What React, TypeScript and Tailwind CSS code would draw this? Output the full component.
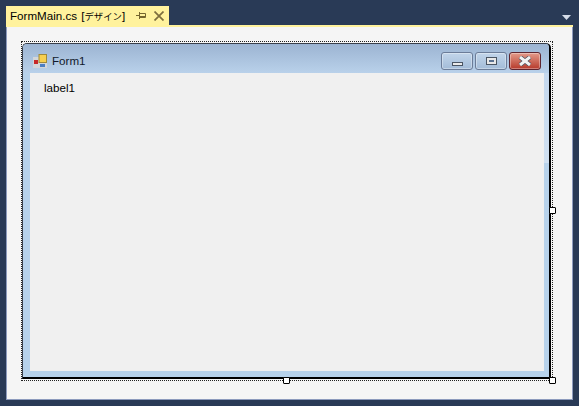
export default function App() {
  const btn = "w-[32px] h-[18px] rounded-[3px] border flex items-center justify-center shadow-[inset_0_0_0_1px_rgba(255,255,255,0.35)]";
  return (
    <div className="w-[579px] h-[406px] bg-[#293a56] flex flex-col overflow-hidden pt-[6px] px-[6px] pb-[6px] font-['Liberation_Sans',sans-serif]">
      <div className="flex items-start h-[19px] shrink-0">
        <div className="w-[163px] h-[19px] bg-[#fff29d] flex items-center pl-[4px] text-black">
          <span className="text-[11.6px] leading-[19px] whitespace-nowrap w-[120px]">
            FormMain.cs <span className="ml-[1px]">[</span><span className="font-['Noto_Sans_CJK_JP',sans-serif] text-[9.4px]">デザイン</span>]
          </span>
          <svg width="10" height="9" viewBox="0 0 10 9" className="ml-[6px]" fill="none" stroke="#75662e">
            <path d="M0 4.5H3.5M3.5 1V8M3.5 2.5H9.5V6.5H3.5M3.5 5.5H9.5" />
          </svg>
          <svg width="10" height="10" viewBox="0 0 10 10" className="ml-[8px]" fill="none" stroke="#7d6e3e" strokeWidth="1.7">
            <path d="M0.5 0.5L9.5 9.5M9.5 0.5L0.5 9.5" />
          </svg>
        </div>
        <div className="flex-1" />
        <svg width="9" height="5" viewBox="0 0 9 5" className="mt-[9px] mr-[2px]"><path d="M0 0H9L4.5 5Z" fill="#d5dce8" /></svg>
      </div>
      <div className="h-[2px] bg-[#fff29d] shrink-0" />
      <div className="flex-1 bg-[#f5f5f5] border-l border-r border-b border-[#8d9bbd] pt-[14px] pl-[14px]">
        <div className="relative w-[532px] h-[340px] border border-dotted border-[#222] py-px">
          <div className="w-[529px] h-[336px] rounded-t-[5px] border-2 border-t border-l border-t-[#3a3f4a] border-l-[#3a3f4a] border-r-black border-b-black flex flex-col bg-[#b7d2eb]">
            <div className="h-[29px] shrink-0 rounded-t-[4px] bg-gradient-to-b from-[#9cb4d2] to-[#b9d1ea] flex items-center pt-[5px] pl-[10px] pr-[8px]">
              <svg width="14" height="14" viewBox="0 0 14 14">
                <rect x="0" y="3" width="14" height="11" fill="#d3d6da" />
                <rect x="1" y="6" width="4" height="4" fill="#c6282a" />
                <rect x="6" y="0.5" width="7.5" height="8" fill="#f6cf4f" stroke="#a08a3a" strokeWidth="1" />
                <rect x="7" y="10" width="5" height="3" fill="#4d7fc4" />
              </svg>
              <span className="ml-[5px] text-[11.6px] leading-[14px] text-[#10192b]">Form1</span>
              <div className="flex-1" />
              <div className="flex gap-[2px] items-center">
                <div className={`${btn} border-[#6b7c98] bg-gradient-to-b from-[#c2d5ea] to-[#a3bcd8]`}>
                  <div className="w-[11px] h-[4px] mt-[6px] bg-[#eaeaea] border border-[#4a5563]" />
                </div>
                <div className={`${btn} border-[#6b7c98] bg-gradient-to-b from-[#c2d5ea] to-[#a3bcd8]`}>
                  <div className="w-[11px] h-[8px] bg-[#e8e8e8] border border-[#4a5563] flex items-center justify-center">
                    <div className="w-[5px] h-[2px] bg-[#5b7291]" />
                  </div>
                </div>
                <div className={`${btn} border-[#5d2530] bg-gradient-to-b from-[#e39a8b] to-[#b5372a]`}>
                  <svg width="14" height="10" viewBox="0 0 14 10" fill="none">
                    <path d="M2 1L12 9M12 1L2 9" stroke="#4b4f5c" strokeWidth="4.4" />
                    <path d="M2 1L12 9M12 1L2 9" stroke="#f2f2f2" strokeWidth="3" />
                  </svg>
                </div>
              </div>
            </div>
            <div className="flex-1 flex pl-[7px] pb-[6px]">
              <div className="w-[514px] h-[298px] bg-[#f0f0f0] pl-[14px] pt-[8px] text-[11.6px] leading-[14px] text-black">
                label1
              </div>
              <div className="w-[5px] h-[90px] bg-gradient-to-b from-[#c4d8ee] to-[#d0e0f1]" />
            </div>
          </div>
          <div className="absolute right-[-4px] top-[165px] w-[7px] h-[7px] bg-white border border-black rounded-[1px]" />
          <div className="absolute left-[261px] bottom-[-4px] w-[7px] h-[7px] bg-white border border-black rounded-[1px]" />
          <div className="absolute right-[-4px] bottom-[-4px] w-[7px] h-[7px] bg-white border border-black rounded-[1px]" />
        </div>
      </div>
    </div>
  );
}
